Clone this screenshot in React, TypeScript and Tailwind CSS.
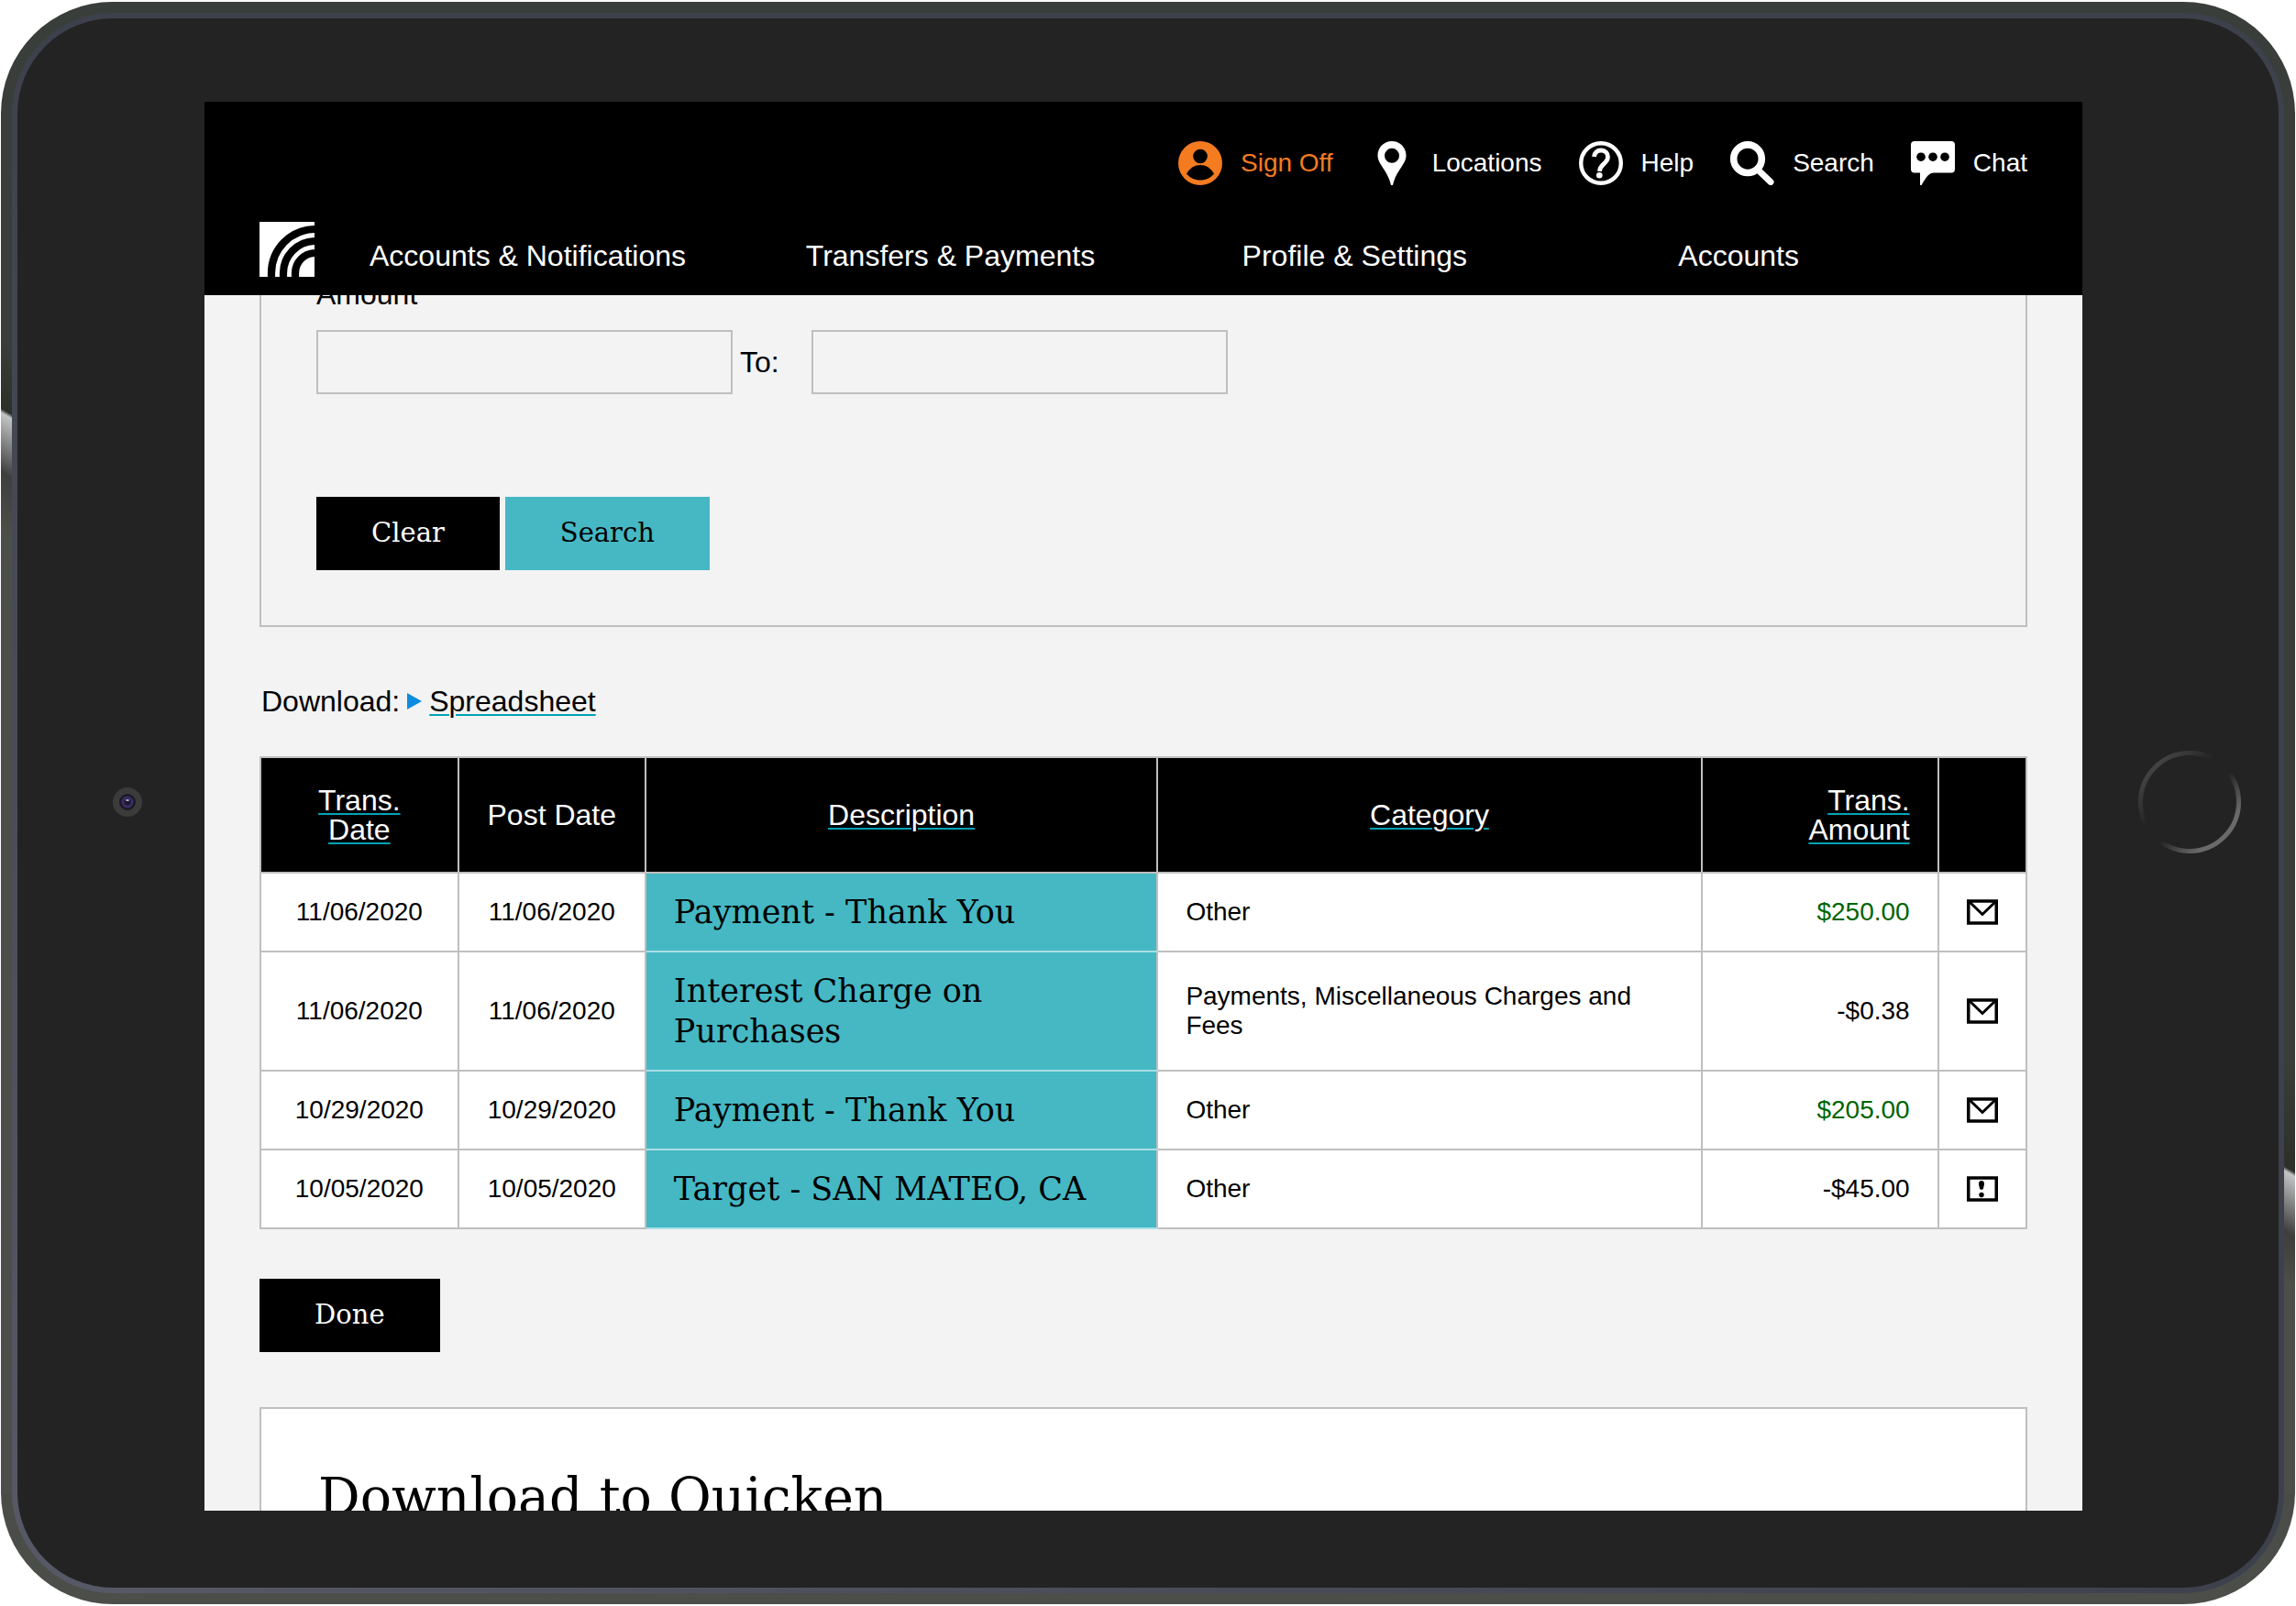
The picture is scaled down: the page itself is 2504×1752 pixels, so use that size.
import { FC, ReactNode } from "react";
import { clsx } from "clsx";

interface Transaction {
  id: number;
  transDate: string;
  postDate: string;
  description: string;
  category: string;
  amount: string;
  credit?: boolean;
  dispute?: boolean;
}

const transactions: Transaction[] = [
  {
    id: 1,
    transDate: "11/06/2020",
    postDate: "11/06/2020",
    description: "Payment - Thank You",
    category: "Other",
    amount: "$250.00",
    credit: true,
  },
  {
    id: 2,
    transDate: "11/06/2020",
    postDate: "11/06/2020",
    description: "Interest Charge on Purchases",
    category: "Payments, Miscellaneous Charges and Fees",
    amount: "-$0.38",
  },
  {
    id: 3,
    transDate: "10/29/2020",
    postDate: "10/29/2020",
    description: "Payment - Thank You",
    category: "Other",
    amount: "$205.00",
    credit: true,
  },
  {
    id: 4,
    transDate: "10/05/2020",
    postDate: "10/05/2020",
    description: "Target - SAN MATEO, CA",
    category: "Other",
    amount: "-$45.00",
    dispute: true,
  },
];

const menu = [
  "Accounts & Notifications",
  "Transfers & Payments",
  "Profile & Settings",
  "Accounts",
];

const UserIcon: FC = () => (
  <svg viewBox="0 0 48 48" className="size-12">
    <circle cx="24" cy="24" r="24" fill="#f47b20" />
    <circle cx="24" cy="16.5" r="7.8" fill="#000" />
    <path d="M9 35.5C13 29 18 26 24 26s11 3 15 9.500C35.500 40 30 42.500 24 42.500S12.500 40 9 35.500z" fill="#000" />
  </svg>
);

const PinIcon: FC = () => (
  <svg viewBox="0 0 48 48" className="size-12" fill="#fff">
    <path
      fillRule="evenodd"
      d="M24 0C15.300 0 8.500 7 8.500 15.500c0 5 2.500 8.500 5 12.500C18.500 35.500 21.500 41 23 48h2c1.500-7 4.500-12.500 9.500-20 2.500-4 5-7.500 5-12.500C39.500 7 32.700 0 24 0zm0 7.800a8 8 0 1 1 0 16 8 8 0 0 1 0-16z"
    />
  </svg>
);

const HelpIcon: FC = () => (
  <svg viewBox="0 0 48 48" className="size-12" fill="none" stroke="#fff">
    <circle cx="24" cy="24" r="21.8" strokeWidth="4.400" />
    <path d="M16.500 17c.5-4.500 3.500-7 7.500-7 4.500 0 7.500 2.800 7.500 7 0 3.500-1.800 5.500-4.500 7.800-3 2.600-4.300 4.200-4.500 8" strokeWidth="4.800" />
    <circle cx="22.300" cy="37.300" r="3.300" fill="#fff" stroke="none" />
  </svg>
);

const SearchIcon: FC = () => (
  <svg viewBox="0 0 48 48" className="size-12" fill="none" stroke="#fff">
    <circle cx="19" cy="19.200" r="15.300" strokeWidth="7.600" />
    <path d="M31 32l13 12.500" strokeWidth="7" strokeLinecap="round" />
  </svg>
);

const ChatIcon: FC = () => (
  <svg viewBox="0 0 48 48" className="size-12">
    <path d="M4 0h40a4 4 0 0 1 4 4v26.500a4 4 0 0 1-4 4H25c-5 0-7.500 3.500-13.500 13.500H10V34.500H4a4 4 0 0 1-4-4V4a4 4 0 0 1 4-4z" fill="#fff" />
    <circle cx="11" cy="17.200" r="4.800" />
    <circle cx="24" cy="17.200" r="4.800" />
    <circle cx="37" cy="17.200" r="4.800" />
  </svg>
);

const Logo: FC = () => (
  <svg viewBox="0 0 60 60" className="size-15">
    <path d="M0 0h60v60H0z" fill="#fff" />
    <g fill="none" stroke="#000" strokeWidth="8.200">
      <path d="M13 60V56A48 48 0 0 1 60 8" />
      <path d="M26 60V56A35 35 0 0 1 60 21" />
      <path d="M39 60V56A22 22 0 0 1 60 34" />
    </g>
  </svg>
);

const MailIcon: FC = () => (
  <svg viewBox="0 0 34 28" className="h-7 w-[34px]" fill="none" stroke="#000" strokeWidth="3.500">
    <path d="M1.750 2h30.500v24h-30.500z" fill="#fff" />
    <path d="M3 3l14 13.500L31 3" strokeWidth="3" />
  </svg>
);

const DisputeIcon: FC = () => (
  <svg viewBox="0 0 34 28" className="h-7 w-[34px]">
    <path d="M1.750 2h30.500v24h-30.500z" fill="#fff" stroke="#000" strokeWidth="3.500" />
    <path d="M16 5c2 0 3.200 1.500 3 4l-1 4.500c-.3 1.800-3.700 1.800-4 0L13 9c-.2-2.500 1-4 3-4z" />
    <circle cx="16" cy="20.500" r="2.700" />
  </svg>
);

const tools: { label: string; icon: ReactNode }[] = [
  { label: "Sign Off", icon: <UserIcon /> },
  { label: "Locations", icon: <PinIcon /> },
  { label: "Help", icon: <HelpIcon /> },
  { label: "Search", icon: <SearchIcon /> },
  { label: "Chat", icon: <ChatIcon /> },
];

const Header: FC = () => (
  <header className="relative z-10 bg-black px-15 pt-[43px] pb-5 text-white">
    <div className="flex justify-end gap-10">
      {tools.map((tool) => (
        <a
          key={tool.label}
          href="#"
          className={clsx(
            "flex items-center gap-5 text-[28px] leading-8",
            tool.label === "Sign Off" && "text-[#f47b20]",
          )}
        >
          {tool.icon}
          {tool.label}
        </a>
      ))}
    </div>
    <div className="mt-10 flex gap-15">
      <Logo />
      <nav className="grid flex-1 grid-cols-[5fr_5fr_5fr_4fr] items-end pb-[7px]">
        {menu.map((item) => (
          <a key={item} href="#" className="text-[32px] leading-8">
            {item}
          </a>
        ))}
      </nav>
    </div>
  </header>
);

const SlabButton: FC<{ children: ReactNode; teal?: boolean }> = ({
  children,
  teal,
}) => (
  <button
    type="button"
    className={clsx(
      "h-20 px-15 font-['DejaVu_Serif',serif] text-[29px]",
      teal ? "bg-[#45b8c4] text-black" : "bg-black text-white",
    )}
  >
    {children}
  </button>
);

const SearchForm: FC = () => (
  <form className="-mt-[37px] border-2 border-[#bfbfbf] px-15 pt-[18px] pb-15">
    <label htmlFor="amount-from" className="block leading-8">
      Amount
    </label>
    <div className="mt-[23px] flex items-center">
      <input
        id="amount-from"
        className="h-[70px] w-[454px] border-2 border-[#bfbfbf] px-4"
      />
      <label htmlFor="amount-to" className="w-[86px] pl-2">
        To:
      </label>
      <input
        id="amount-to"
        className="h-[70px] w-[454px] border-2 border-[#bfbfbf] px-4"
      />
    </div>
    <div className="mt-28 flex gap-1.5">
      <SlabButton>Clear</SlabButton>
      <SlabButton teal>Search</SlabButton>
    </div>
  </form>
);

const SortLink: FC<{ children: ReactNode }> = ({ children }) => (
  <a
    href="#"
    className="underline decoration-[#00a3b4] decoration-2 underline-offset-3"
  >
    {children}
  </a>
);

const TransactionTable: FC = () => (
  <table className="mt-[42px] w-full table-fixed border-collapse bg-white text-[28px] leading-8">
    <colgroup>
      <col className="w-[11.2%]" />
      <col className="w-[10.6%]" />
      <col className="w-[29%]" />
      <col className="w-[30.8%]" />
      <col className="w-[13.4%]" />
      <col className="w-[5%]" />
    </colgroup>
    <thead>
      <tr className="h-[126px] bg-black text-[32px] text-white *:border-2 *:border-[#bfbfbf] *:px-[30px] *:font-normal">
        <th>
          <SortLink>Trans. Date</SortLink>
        </th>
        <th className="whitespace-nowrap">Post Date</th>
        <th>
          <SortLink>Description</SortLink>
        </th>
        <th>
          <SortLink>Category</SortLink>
        </th>
        <th className="text-right">
          <SortLink>
            Trans.
            <br />
            Amount
          </SortLink>
        </th>
        <th></th>
      </tr>
    </thead>
    <tbody>
      {transactions.map((row) => (
        <tr key={row.id} className="h-[86px] *:border-2 *:border-[#bfbfbf]">
          <td className="text-center">{row.transDate}</td>
          <td className="text-center">{row.postDate}</td>
          <td className="border-y-[#a9dfe5]! bg-[#45b8c4] px-[30px] py-5 font-['DejaVu_Serif',serif] text-[35px] leading-11">
            {row.description}
          </td>
          <td className="px-[30px]">{row.category}</td>
          <td className={clsx("px-[30px] text-right", row.credit && "text-[#006400]")}>
            {row.amount}
          </td>
          <td>
            <a
              href="#"
              aria-label={row.dispute ? "Dispute" : "Message"}
              className="flex justify-center"
            >
              {row.dispute ? <DisputeIcon /> : <MailIcon />}
            </a>
          </td>
        </tr>
      ))}
    </tbody>
  </table>
);

const Camera: FC = () => (
  <svg viewBox="0 0 32 32" className="size-8">
    <circle cx="16" cy="16" r="16" fill="#3b3b3b" />
    <circle cx="16" cy="16" r="9" fill="#1b1a26" />
    <circle cx="16" cy="16" r="6.500" fill="#3a2d63" />
    <circle cx="16" cy="16" r="3.500" fill="#1c1730" />
    <ellipse cx="16" cy="14" rx="2" ry="1" fill="#b9b4c8" />
  </svg>
);

const HomeButton: FC = () => (
  <svg viewBox="0 0 112 112" className="size-28">
    <defs>
      <linearGradient id="home-ring" x1="0" y1="0" x2="1" y2="1">
        <stop offset="0.1" stopColor="#484848" />
        <stop offset="0.4" stopColor="#232323" />
        <stop offset="0.55" stopColor="#232323" />
        <stop offset="0.8" stopColor="#6a6a6a" />
      </linearGradient>
    </defs>
    <circle cx="56" cy="56" r="53.500" fill="none" stroke="url(#home-ring)" strokeWidth="5" />
  </svg>
);

const App: FC = () => {
  return (
    <div className="h-screen bg-white px-px py-0.5 font-['Liberation_Sans',Arial,sans-serif] text-[32px] text-black">
      {/* metal rim */}
      <div className="relative h-full overflow-hidden rounded-[122px] bg-linear-to-b from-[#3a3e3a] from-50% to-[#4c4e49] p-3">
        <div className="absolute top-[120px] bottom-[120px] left-0 w-3 bg-[linear-gradient(210deg,#3a3e3a_0,#3a3e3a_220px,#2c3029_286px,#c3c4c6_290px,#3e3f3d_346px,#4c4e49_400px)]" />
        <div className="absolute top-[120px] right-0 bottom-[120px] w-3 bg-[linear-gradient(210deg,#3a3e3a_0,#3a3e3a_900px,#2c3029_1002px,#c3c4c6_1006px,#3e3f3d_1063px,#4c4e49_1110px)]" />
        <div className="relative h-full rounded-[110px] bg-linear-to-bl from-[#3d414c] from-50% to-[#575a66] p-[6px]">
          <div className="flex h-full items-stretch rounded-[104px] bg-[#232323] pt-[91px] pb-[84px]">
            <div className="flex w-[204px] items-center justify-end pr-[68px] pb-2.5">
              <Camera />
            </div>
            <div className="flex min-w-0 flex-1 flex-col overflow-hidden bg-[#f3f3f3]">
              <Header />
              <main className="px-15">
                <SearchForm />
                <p className="mt-[63px] flex items-center pl-0.5 leading-9">
                  Download:
                  <svg viewBox="0 0 16 18" className="mx-2 h-[18px] w-4">
                    <path d="M0 0l16 9-16 9z" fill="#0b8ce0" />
                  </svg>
                  <SortLink>Spreadsheet</SortLink>
                </p>
                <TransactionTable />
                <div className="mt-[54px]">
                  <SlabButton>Done</SlabButton>
                </div>
                <section className="mt-15 border-2 border-[#bfbfbf] bg-white px-[62px] py-16">
                  <h2 className="font-['DejaVu_Serif',serif] text-[57px] leading-16">
                    Download to Quicken
                  </h2>
                </section>
              </main>
            </div>
            <div className="flex w-[214px] items-center justify-end pr-[41px] pb-2.5">
              <HomeButton />
            </div>
          </div>
        </div>
      </div>
    </div>
  );
};

export default App;
